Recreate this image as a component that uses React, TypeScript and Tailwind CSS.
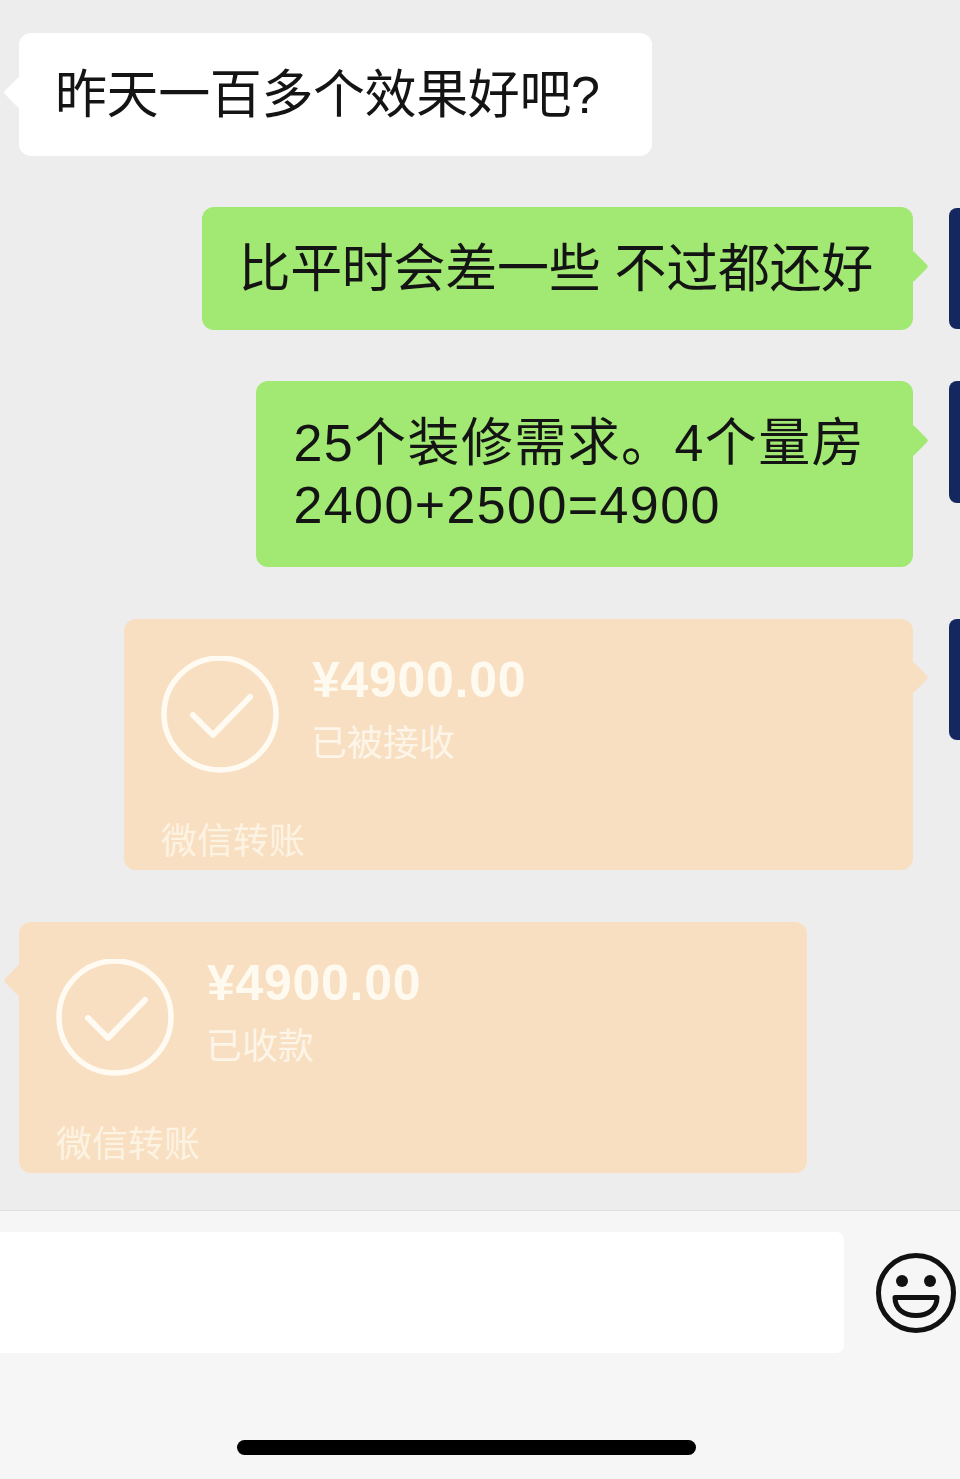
import type { ReactNode } from 'react';

const FONT = { fontFamily: '"Liberation Sans", "Noto Sans CJK SC", "Noto Sans", sans-serif' };

function Avatar({ className }: { className: string }) {
  return <div className={`w-[120px] shrink-0 rounded-lg bg-[#14275e] ml-[36px] mr-[-109px] ${className}`} />;
}

function Bubble({ color, side, className, children }: { color: string; side: 'left' | 'right'; className: string; children: ReactNode }) {
  return (
    <div className={`relative rounded-xl pt-[31px] text-[52px] leading-[62px] text-[#141414] ${color} ${className}`}>
      {/* tail */}
      <div
        className={`absolute top-[48px] w-[23px] h-[23px] rotate-45 rounded-[3px] ${color} ${
          side === 'left' ? 'left-[-11px]' : 'right-[-11px]'
        }`}
      />
      <div className="relative whitespace-pre">{children}</div>
    </div>
  );
}

function TransferCard({ width, side, amount, status }: { width: string; side: 'left' | 'right'; amount: string; status: string }) {
  return (
    <div className={`relative h-[251px] mt-[1px] rounded-xl bg-[#f8dfc1] pl-[37px] pt-[37px] ${width}`}>
      <div
        className={`absolute top-[47px] w-[23px] h-[23px] rotate-45 rounded-[3px] bg-[#f8dfc1] ${
          side === 'left' ? 'left-[-11px]' : 'right-[-11px]'
        }`}
      />
      <div className="relative flex gap-[33px]">
        <svg width="118" height="118" viewBox="0 0 118 118" fill="none" className="shrink-0">
          <circle cx="59" cy="58" r="56" stroke="#fffbf2" strokeWidth="5.5" />
          <path d="M32 59 L52 79 L89 41" stroke="#fffbf2" strokeWidth="6" strokeLinecap="round" strokeLinejoin="round" />
        </svg>
        <div>
          <div className="text-[50px] leading-[50px] font-bold tracking-[0.7px] text-[#fffaf0] mt-[-1px]">{amount}</div>
          <div className="text-[36px] leading-[44px] text-[#fdf5e8] mt-[17px] ml-[-1px]">{status}</div>
        </div>
      </div>
      <div className="relative text-[36px] leading-[44px] text-[#fdf3e3] mt-[46px]">微信转账</div>
    </div>
  );
}

export default function App() {
  return (
    <div className="w-[960px] h-[1479px] overflow-hidden flex flex-col bg-[#ededed]" style={FONT}>
      {/* Chat */}
      <div className="h-[1210px] shrink-0 flex flex-col gap-[51px] pt-[33px] pl-[19px]">
        <div className="flex">
          <Bubble color="bg-white" side="left" className="pl-[36px] pr-[52px] pb-[30px] tracking-[-0.4px]">昨天一百多个效果好吧?</Bubble>
        </div>
        <div className="flex justify-end">
          <Bubble color="bg-[#a1e972]" side="right" className="pl-[36px] pr-[40px] pb-[30px] tracking-[-0.3px]">比平时会差一些 不过都还好</Bubble>
          <Avatar className="h-[121px] mt-[1px]" />
        </div>
        <div className="flex justify-end items-start">
          <Bubble color="bg-[#a1e972]" side="right" className="pl-[37px] pr-[48px] pb-[31px] tracking-[1.4px]">{'25个装修需求。4个量房\n2400+2500=4900'}</Bubble>
          <Avatar className="h-[122px]" />
        </div>
        <div className="flex justify-end items-start">
          <TransferCard width="w-[789px]" side="right" amount="¥4900.00" status="已被接收" />
          <Avatar className="h-[121px] mt-[1px]" />
        </div>
        <div className="flex">
          <TransferCard width="w-[788px]" side="left" amount="¥4900.00" status="已收款" />
        </div>
      </div>

      {/* Input bar */}
      <div className="flex-1 flex flex-col bg-[#f6f6f6] border-t border-[#e0e0e0]">
        <div className="flex items-start pt-[21px]">
          <div className="w-[844px] h-[121px] rounded-r-lg bg-white" />
          <svg width="80" height="80" viewBox="0 0 80 80" fill="none" className="ml-[32px] mt-[21px] shrink-0">
            <circle cx="40" cy="40" r="37.5" stroke="#111" strokeWidth="5" />
            <circle cx="26" cy="28" r="6" fill="#111" />
            <circle cx="54" cy="28" r="6" fill="#111" />
            <path d="M19 44.5 H61 C61 56 52 62.5 40 62.5 C28 62.5 19 56 19 44.5 Z" stroke="#111" strokeWidth="5" strokeLinejoin="round" />
          </svg>
        </div>
        <div className="mt-[87px] ml-[237px] w-[459px] h-[15px] rounded-full bg-black" />
      </div>
    </div>
  );
}
